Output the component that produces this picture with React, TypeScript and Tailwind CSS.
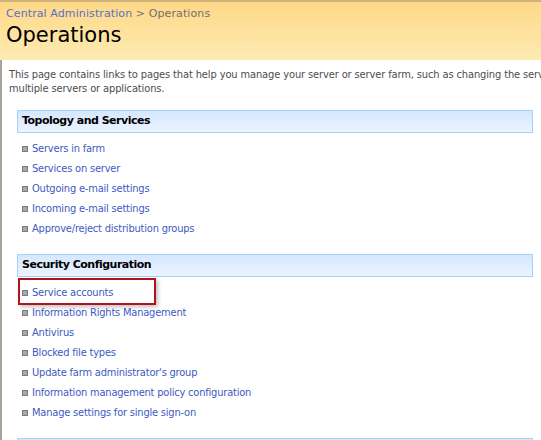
const topology = [
  "Servers in farm",
  "Services on server",
  "Outgoing e-mail settings",
  "Incoming e-mail settings",
  "Approve/reject distribution groups",
];

const security = [
  "Service accounts",
  "Information Rights Management",
  "Antivirus",
  "Blocked file types",
  "Update farm administrator's group",
  "Information management policy configuration",
  "Manage settings for single sign-on",
];

function SectionHeader({ title }: { title: string }) {
  return (
    <div className="ml-[15px] mr-[8px] h-[23px] border border-[#a9d0f5] bg-gradient-to-b from-[#d5e7ff] to-[#ebf4ff] pl-[4px] flex items-center">
      <span className="font-['DejaVu_Sans',sans-serif] text-[11px] font-bold tracking-[-0.5px] text-black">{title}</span>
    </div>
  );
}

function LinkItem({ label, highlight }: { label: string; highlight?: boolean }) {
  return (
    <li className="relative h-[20px] flex items-center pl-[20px]">
      {highlight && (
        <span className="absolute left-[16px] top-[-5px] w-[138px] h-[27px] border-2 border-[#b3121c] shadow-[2px_2px_4px_rgba(0,0,0,0.25)]" />
      )}
      <span className="w-[6px] h-[6px] bg-[#a8a8a8] border border-[#7b7b7b] mr-[4px]" />
      <span className="text-[11px] text-[#3d5ac2]">{label}</span>
    </li>
  );
}

export default function App() {
  return (
    <div className="w-[541px] h-[440px] overflow-hidden bg-white font-['DejaVu_Sans_Condensed','DejaVu_Sans',sans-serif] tracking-[-0.2px]">
      <div className="h-[60px] border-t-2 border-[#cdb27a] bg-gradient-to-b from-[#fed886] to-[#feebb3] pl-[6px] pt-[5px] font-['DejaVu_Sans',sans-serif]">
        <div className="text-[11px] leading-[14px] tracking-[0.1px]">
          <span className="text-[#5870c4]">Central Administration</span>
          <span className="text-[#707070]"> &gt; Operations</span>
        </div>
        <h1 className="text-[21px] leading-[26px] text-black mt-[1px] tracking-normal">Operations</h1>
      </div>
      <div className="border-l-2 border-[#a9a49b] h-[380px]">
        <p className="pl-[7px] pt-[8px] text-[11px] leading-[14px] tracking-[-0.12px] text-[#4d4d4d] whitespace-nowrap">
          This page contains links to pages that help you manage your server or server farm, such as changing the server
          <br />
          multiple servers or applications.
        </p>
        <div className="mt-[14px]">
          <SectionHeader title="Topology and Services" />
          <ul className="mt-[6px]">
            {topology.map((t) => (
              <LinkItem key={t} label={t} />
            ))}
          </ul>
        </div>
        <div className="mt-[15px]">
          <SectionHeader title="Security Configuration" />
          <ul className="mt-[6px]">
            {security.map((t, i) => (
              <LinkItem key={t} label={t} highlight={i === 0} />
            ))}
          </ul>
        </div>
        <div className="mt-[15px]">
          <SectionHeader title="" />
        </div>
      </div>
    </div>
  );
}
